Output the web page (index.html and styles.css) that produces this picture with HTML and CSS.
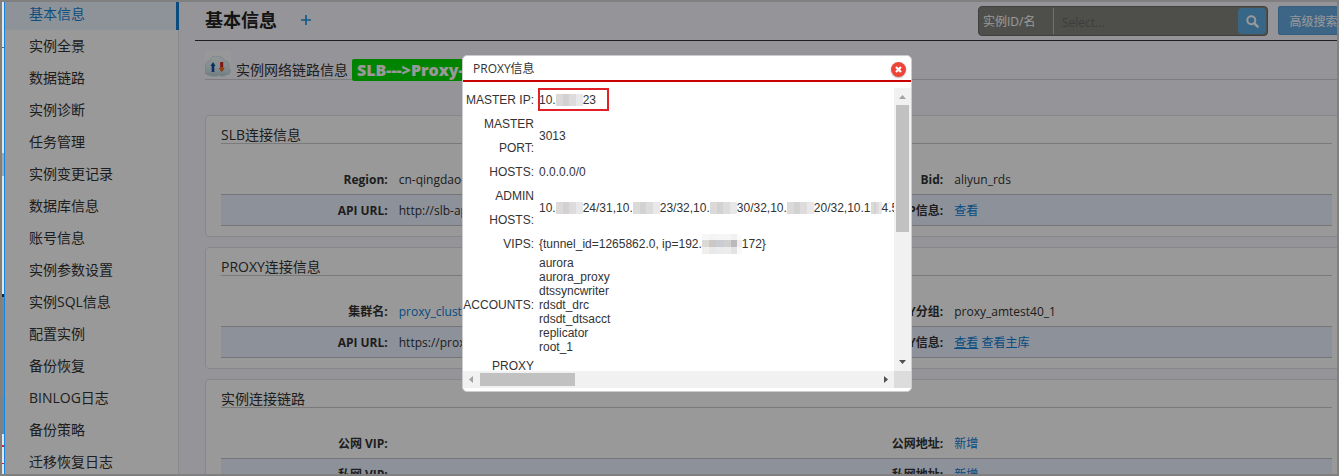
FILE: index.html
```
<!DOCTYPE html>
<html lang="zh-CN">
  <head>
    <meta http-equiv="Content-type" content="text/html; charset=utf-8">
    <title>基本信息</title>
    <link rel="stylesheet" href="styles.css">
  </head>
  <body>
    <div class="page">
      <div class="edge"></div>
      <div class="app">
        <nav class="side_nav">
          <a class="active" href="#base">基本信息</a>
          <a href="#all">实例全景</a>
          <a href="#link">数据链路</a>
          <a href="#diagnose">实例诊断</a>
          <a href="#task">任务管理</a>
          <a href="#change">实例变更记录</a>
          <a href="#db">数据库信息</a>
          <a href="#account">账号信息</a>
          <a href="#param">实例参数设置</a>
          <a href="#sql">实例SQL信息</a>
          <a href="#config">配置实例</a>
          <a href="#restore">备份恢复</a>
          <a href="#binlog">BINLOG日志</a>
          <a href="#policy">备份策略</a>
          <a href="#migrate">迁移恢复日志</a>
        </nav>
        <div class="main">
          <div class="header">
            <h1>基本信息</h1>
            <a class="add" href="#add" aria-label="add">
              <svg width="10" height="10" viewBox="0 0 10 10"><path d="M5 0v10M0 5h10" stroke="#1b8fe0" stroke-width="1.6"/></svg>
            </a>
            <form class="search">
              <label for="keyword">实例ID/名</label>
              <input id="keyword" type="text" placeholder="Select...">
              <button type="button" aria-label="search">
                <svg width="13" height="13" viewBox="0 0 13 13"><circle cx="5.3" cy="5.3" r="4" fill="none" stroke="#fff" stroke-width="2"/><path d="M8.3 8.3l3.4 3.4" stroke="#fff" stroke-width="2.4" stroke-linecap="round"/></svg>
              </button>
            </form>
            <button class="advanced" type="button">高级搜索</button>
          </div>
          <div class="link_info">
            <svg class="cloud" width="26" height="26" viewBox="0 0 26 26">
              <defs>
                <linearGradient id="sky" x1="0" y1="0" x2="0" y2="1">
                  <stop offset="0" stop-color="#f6fbfc"/>
                  <stop offset=".6" stop-color="#dcebef"/>
                  <stop offset="1" stop-color="#b9d2d8"/>
                </linearGradient>
              </defs>
              <rect width="26" height="26" fill="#fdfdfe"/>
              <path d="M4 24.500C0 24-1 20 1 17c-2-4 1-7 4-7 0-4 5-6 9-4 3 0 5 2 6 4 4 0 5 4 4 7 3 3 1 7-3 7-2 1.500-5 1.500-7 .500-3 1-7 1-10 0z" fill="url(#sky)" stroke="#c4dbe0" stroke-width=".8"/>
              <path d="M6.700 21v-6H5.500L8 11l2.500 4H9.300v6z" fill="#0d4fa8"/>
              <path d="M15.200 11h3v6h1.300l-2.800 4-2.800-4h1.300z" fill="#d9201c"/>
              <path d="M15.200 16h3v1h1.300l-2.800 4-2.800-4h1.300z" fill="#f0701c"/>
            </svg>
            <span>实例网络链路信息</span>
            <strong>SLB---&gt;Proxy---&gt;DB</strong>
          </div>

          <div class="card">
            <h2>SLB连接信息</h2>
            <table>
              <tr><th>Region:</th><td>cn-qingdao-env</td><th>Bid:</th><td>aliyun_rds</td></tr>
              <tr><th>API URL:</th><td>http://slb-api</td><th>VIP信息:</th><td><a href="#vip">查看</a></td></tr>
            </table>
          </div>

          <div class="card">
            <h2>PROXY连接信息</h2>
            <table>
              <tr><th>集群名:</th><td><a href="#cluster">proxy_cluster</a></td><th>PROXY分组:</th><td>proxy_amtest40_1</td></tr>
              <tr><th>API URL:</th><td>https://proxy</td><th>PROXY信息:</th><td><a class="hover" href="#proxy">查看</a> <a href="#master">查看主库</a></td></tr>
            </table>
          </div>

          <div class="card">
            <h2>实例连接链路</h2>
            <table>
              <tr><th>公网 VIP:</th><td></td><th>公网地址:</th><td><a href="#pub">新增</a></td></tr>
              <tr><th>私网 VIP:</th><td></td><th>私网地址:</th><td><a href="#pri">新增</a></td></tr>
            </table>
          </div>
        </div>
        <div class="mask"></div>
      </div>
    </div>

    <div class="dialog" role="dialog" aria-labelledby="dialog_title">
      <div class="dialog_head">
        <span id="dialog_title">PROXY信息</span>
        <button type="button" aria-label="close">
          <svg width="7" height="7" viewBox="0 0 7 7"><path d="M1 1l5 5M6 1L1 6" stroke="#fff" stroke-width="2.2"/></svg>
        </button>
      </div>
      <div class="dialog_body">
        <div class="view">
          <table>
            <tr><th>MASTER IP:</th><td class="marked">10.<i class="blur"></i>23</td></tr>
            <tr><th>MASTER PORT:</th><td>3013</td></tr>
            <tr><th>HOSTS:</th><td>0.0.0.0/0</td></tr>
            <tr><th>ADMIN HOSTS:</th><td>10.<i class="blur"></i>24/31,10.<i class="blur"></i>23/32,10.<i class="blur"></i>30/32,10.<i class="blur"></i>20/32,10.1<i class="blur short"></i>4.5</td></tr>
            <tr><th>VIPS:</th><td>{tunnel_id=1265862.0, ip=192.<i class="blur long"></i>172}</td></tr>
            <tr><th>ACCOUNTS:</th><td class="list">aurora<br>aurora_proxy<br>dtssyncwriter<br>rdsdt_drc<br>rdsdt_dtsacct<br>replicator<br>root_1</td></tr>
            <tr><th>PROXY HOSTS:</th><td></td></tr>
          </table>
        </div>
        <div class="bar bar_y">
          <svg width="17" height="17" viewBox="0 0 17 17"><path d="M5 11l3.500-4 3.500 4z" fill="#a3a3a3"/></svg>
          <div class="thumb"></div>
          <svg width="17" height="17" viewBox="0 0 17 17"><path d="M5 6l3.500 4 3.500-4z" fill="#505050"/></svg>
        </div>
        <div class="bar bar_x">
          <svg width="17" height="17" viewBox="0 0 17 17"><path d="M10 5l-4 3.500 4 3.500z" fill="#a3a3a3"/></svg>
          <div class="thumb"></div>
          <svg width="17" height="17" viewBox="0 0 17 17"><path d="M7 5l4 3.500-4 3.500z" fill="#505050"/></svg>
        </div>
        <div class="corner"></div>
      </div>
    </div>
  </body>
</html>
```
FILE: styles.css
```
*,*:after {box-sizing:border-box;}
html,body {height:100%; margin:0;}
body {border:2px solid #808080; overflow:hidden; font:12px/20px "Open Sans","Noto Sans CJK SC",sans-serif; color:#333;}
a {color:#0a80d8; text-decoration:none;}
button,input {font-family:inherit; border:0; padding:0;}
svg {display:block; flex:none;}

.page {display:flex; height:100%; overflow:hidden;}
.edge {width:2px; flex:none; background:linear-gradient(#e6e6e6 45px,#666 45px,#666 46px,#e6e6e6 46px,#e6e6e6 151px,#aaa 151px,#aaa 174px,#e6e6e6 174px,#e6e6e6 292px,#222 292px,#222 295px,#858585 295px,#858585 395px,#6f8796 395px,#6f8796 432px,#e6e6e6 432px,#e6e6e6 443px,#d22 443px,#d22 445px,#e6e6e6 445px,#e6e6e6 461px,#d22 461px,#d22 462px,#e6e6e6 462px);}
.app {position:relative; display:flex; flex:1; min-width:0; border-left:1px solid #1583e0; background:#f8f7fd;}
.mask {position:absolute; top:0; right:0; bottom:0; left:0; background:#000; opacity:0.4;}

.side_nav {width:174px; flex:none; background:#fff; border-right:1px solid #e4e4e8;}
.side_nav a {display:block; height:32px; padding-left:24px; font-size:14px; line-height:32px; color:#333;}
.side_nav a.active {height:28px; line-height:24px; margin-right:-1px; background:#ecf6fe; border-right:3px solid #0f80d6; color:#1a84d4;}

.main {flex:1; min-width:0; padding-left:16px; overflow:hidden;}
.header {display:flex; height:39px; padding-left:10px; border-bottom:1px solid #333; overflow:hidden;}
.header h1 {margin:0; font-size:18px; line-height:36px; color:#222;}
.add {margin:13px 0 0 24px;}
.search {display:flex; flex:none; width:290px; height:30px; margin:4px 10px 0 auto; padding:1px; border-radius:4px; background:#83847e; border:1px solid #6c6d69;}
.search label {width:74px; padding-left:3px; line-height:28px; color:#fff; border-right:1px solid #bbb;}
.search input {flex:1; min-width:0; padding:2px 8px 0; background:transparent; font-size:12px; color:#fff;}
.search input::placeholder {color:#666; opacity:1;}
.search button {display:flex; align-items:center; justify-content:center; width:28px; border-radius:4px; background:#5cabdf;}
.advanced {flex:none; width:71px; height:29px; margin:4px -12px 0 0; border:1px solid #5b9bd0; border-radius:2px; background:#66abdf; font-size:12px; color:#fff;}

.link_info {display:flex; height:29px; margin:10px 0 35px 10px; border-bottom:1px solid #d0d0d0; font-size:14px; line-height:20px;}
.link_info span {margin:9px 4px 0 5px;}
.link_info strong {height:22px; margin-top:8px; padding:0 5px; border-radius:2px; background:#00dc00; font:800 16px/22px "Open Sans",sans-serif; color:#fff;}

.card {margin:0 -11px 10px 10px; padding:0 15px 10px; background:#fff; border:1px solid #e2e2e8; border-radius:4px;}
.card h2 {margin:0 0 20px; height:28px; padding-top:9px; border-bottom:1px solid #ccc; font-size:14px; font-weight:normal; line-height:20px;}
.card table {width:100%; table-layout:fixed; border-spacing:0;}
.card th,.card td {height:31px; width:34%; padding:2px 0 0; border-bottom:1px solid #c4c4c4; text-align:left; line-height:20px;}
.card th {width:16%; padding-right:11px; text-align:right;}
.card tr:nth-child(2) {background:#ebf2ff;}
.card a.hover {text-decoration:underline;}

.dialog {position:absolute; top:55px; left:462px; width:450px; padding-bottom:3px; background:#fff; border:1px solid #ccc; border-radius:5px; overflow:hidden; color:#333;}
.dialog_head {display:flex; justify-content:space-between; align-items:center; height:26px; padding:2px 5px 0 10px; border-bottom:2px solid #c80000;}
.dialog_head button {display:flex; align-items:center; justify-content:center; width:15px; height:15px; border-radius:50%; background:#ee4438; box-shadow:0 1px 2px #bbb;}
.dialog_body {display:grid; grid-template:283px 17px / 1fr 17px; margin-top:6px; font-family:"Liberation Sans",Arial,sans-serif;}
.view {overflow:hidden;}
.view table {width:900px; border-spacing:0; table-layout:fixed;}
.view th {width:71px; padding:0; font-weight:normal; text-align:right; line-height:24px;}
.view td {padding:0 0 0 5px; line-height:24px; white-space:nowrap;}
.view td.list {line-height:14px;}
.marked {position:relative;}
.marked:after {content:""; position:absolute; left:4px; top:0; width:71px; height:23px; border:2px solid #e01f26;}
.blur {display:inline-block; width:27px; height:12px; vertical-align:-2px; background:linear-gradient(90deg,#dcdad9 0 25%,#d2d2d2 25% 50%,#dddbdb 50% 75%,#e8e8ea 75%);}
.blur.short {width:11px;}
.blur.long {width:40px; height:20px; vertical-align:-6px; background:linear-gradient(rgba(255,255,255,0.8) 0 30%,transparent 30% 65%,rgba(255,255,255,0.6) 65%),linear-gradient(90deg,#dbd8d5 0 18%,#cac7c4 18% 36%,#c9cdd1 36% 54%,#d0d0d0 54% 72%,#bbb9b9 72% 88%,#eee 88%);}

.bar {display:flex; background:#f1f1f1;}
.bar .thumb {background:#c1c1c1;}
.bar_y {flex-direction:column;}
.bar_y .thumb {height:127px; margin:0 2px auto;}
.bar_x .thumb {width:95px; margin:2px auto 2px 0;}
.corner {background:#dcdcdc;}
```
